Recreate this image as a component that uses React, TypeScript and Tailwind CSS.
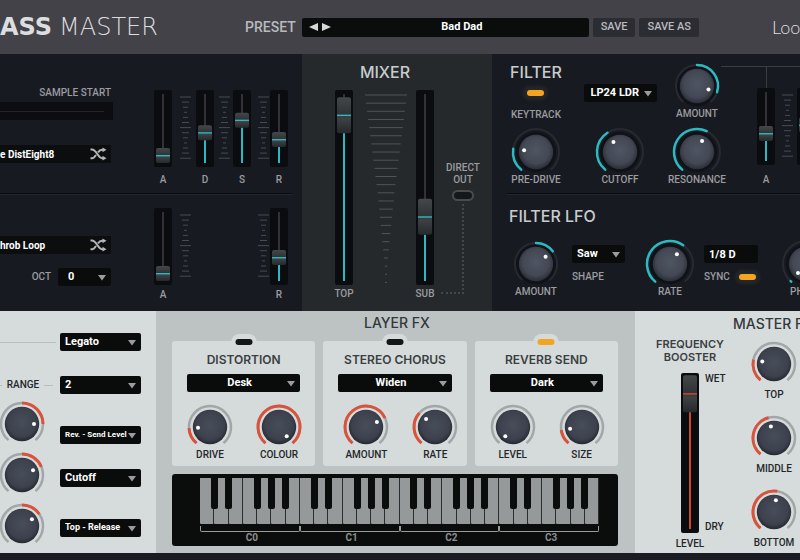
import { useState } from "react";
import type { ReactNode } from "react";

const LABEL = "font-[Roboto,sans-serif] text-[10px] leading-3 font-medium whitespace-nowrap";
const HEADING = "font-[Inter,sans-serif] leading-5 font-medium whitespace-nowrap";

function polar(angle: number, radius: number) {
  const rad = (angle * Math.PI) / 180;
  return [25 + radius * Math.sin(rad), 25 - radius * Math.cos(rad)];
}

function arc(from: number, to: number, radius: number) {
  const [x1, y1] = polar(from, radius);
  const [x2, y2] = polar(to, radius);
  return `M${x1} ${y1} A${radius} ${radius} 0 ${to - from > 180 ? 1 : 0} 1 ${x2} ${y2}`;
}

type KnobProps = {
  label?: string;
  name?: string;
  angle: number;
  bipolar?: boolean;
  ring?: number;
  light?: boolean;
  gap?: string;
};

function Knob({ label, name, angle, bipolar = false, ring = 23, light = false, gap = "mt-px" }: KnobProps) {
  const [value, setValue] = useState(angle);
  const start = bipolar ? Math.min(0, value) : -140;
  const end = bipolar ? Math.max(0, value) : value;
  const [dx, dy] = polar(value, 12);
  return (
    <label className="flex shrink-0 flex-col items-center">
      <span className="relative block h-[46px] w-[50px]">
        <svg width="50" height="46" viewBox="0 0 50 46" className="block overflow-visible" aria-hidden="true">
          <defs>
            <radialGradient id="cap-dark" cx="50%" cy="45%" r="55%">
              <stop offset="0" stopColor="#505563" />
              <stop offset="0.7" stopColor="#434854" />
              <stop offset="1" stopColor="#2a2e37" />
            </radialGradient>
            <radialGradient id="cap-light" cx="50%" cy="45%" r="55%">
              <stop offset="0" stopColor="#474d59" />
              <stop offset="0.75" stopColor="#3c414d" />
              <stop offset="1" stopColor="#242830" />
            </radialGradient>
          </defs>
          {!light && <circle cx="25" cy="25" r="20" fill="#101218" />}
          <path d={arc(-140, 140, ring)} fill="none" stroke={light ? "#a2a6a8" : "#272a31"} strokeWidth={light ? 2.5 : 2} />
          {end > start && (
            <path
              d={arc(start, end, ring)}
              fill="none"
              stroke={light ? "#d9533c" : "#2cb9c3"}
              strokeWidth={light ? 3 : 2.5}
              strokeLinecap={light ? "butt" : "round"}
            />
          )}
          <circle cx="25" cy="25" r="17.2" fill={light ? "url(#cap-light)" : "url(#cap-dark)"} />
          <circle cx={dx} cy={dy} r="2" fill="#fff" />
        </svg>
        <input
          type="range"
          min={-140}
          max={140}
          value={value}
          onChange={(e) => setValue(Number(e.target.value))}
          aria-label={label ?? name}
          className="absolute inset-0 h-full w-full cursor-pointer opacity-0"
        />
      </span>
      {label && <span className={`${LABEL} ${gap} ${light ? "text-[#24272a]" : "text-[#9b9ca0]"}`}>{label}</span>}
    </label>
  );
}

type FaderProps = {
  label?: string;
  name: string;
  level: number;
  height?: number;
  cap?: number;
  red?: boolean;
  gap?: string;
};

function Fader({ label, name, level, height = 77, cap = 15, red = false, gap = "mt-[7px]" }: FaderProps) {
  const [value, setValue] = useState(level);
  const top = 1 + (height - 5 - cap) * (1 - value / 100);
  const color = red ? "#cf4a2c" : "#2cb9c3";
  return (
    <label className="flex w-[18px] flex-col items-center">
      <span className="relative block">
        <svg width="18" height={height} className="block" aria-hidden="true">
          <defs>
            <linearGradient id="fader-cap" x1="0" y1="0" x2="0" y2="1">
              <stop offset="0" stopColor="#44484b" />
              <stop offset="0.45" stopColor="#303437" />
              <stop offset="0.6" stopColor="#3d4144" />
              <stop offset="1" stopColor="#26292c" />
            </linearGradient>
          </defs>
          <rect width="18" height={height} rx="2" fill="#0b0c0f" />
          <rect x="8" y="4" width="2" height={height - 8} fill="#303238" />
          <rect x="8" y={top + cap} width="2" height={Math.max(0, height - 4 - top - cap)} fill={color} />
          <rect x="2" y={top} width="14" height={cap} rx="2" fill="url(#fader-cap)" />
          <rect x="2" y={top + cap / 2 - 0.5} width="14" height="1.4" fill={color} />
        </svg>
        <input
          type="range"
          min={0}
          max={100}
          value={value}
          onChange={(e) => setValue(Number(e.target.value))}
          aria-label={name}
          className="absolute inset-0 h-full w-full cursor-pointer opacity-0 [direction:rtl] [writing-mode:vertical-lr]"
        />
      </span>
      {label && <span className={`${LABEL} ${gap} ${red ? "text-[#24272a]" : "text-[#9b9ca0]"}`}>{label}</span>}
    </label>
  );
}

const TICKS = [11, 7, 5, 3, 5, 7, 11, 7, 5, 3, 5, 7, 11];

function Ticks() {
  return (
    <svg width="11" height="77" className="block" aria-hidden="true">
      {TICKS.map((w, i) => (
        <rect key={i} x={(11 - w) / 2} y={6.5 + i * 5.1} width={w} height="1" fill="#484b50" />
      ))}
    </svg>
  );
}

function MixerScale() {
  return (
    <svg width="42" height="195" className="block" aria-hidden="true">
      {Array.from({ length: 24 }, (_, i) => {
        const w = Math.max(2, 42 - i * 2.1 + (i > 12 ? (i - 12) * 0.5 : 0));
        return <rect key={i} x={(42 - w) / 2} y={4.5 + i * 8.15} width={w} height="1" fill="#505457" />;
      })}
    </svg>
  );
}

type PickerProps = {
  name: string;
  value: string;
  width?: string;
  text?: string;
};

function Picker({ name, value, width = "w-full", text = "pl-[5px] text-[11px]" }: PickerProps) {
  return (
    <span className={`relative block h-[18px] shrink-0 ${width}`}>
      <select
        aria-label={name}
        defaultValue={value}
        className={`block h-full w-full appearance-none rounded-[2px] bg-[#0a0c0c] font-[Roboto,sans-serif] font-bold text-white ${text}`}
      >
        <option>{value}</option>
      </select>
      <svg width="8" height="6" className="pointer-events-none absolute top-[7px] right-[5px]" aria-hidden="true">
        <path d="M0 0H8L4 5.5Z" fill="#9a9da0" />
      </svg>
    </span>
  );
}

function Shuffle() {
  return (
    <button aria-label="Shuffle" className="block">
      <svg width="17" height="14" viewBox="0 0 17 14" fill="none" stroke="#b4b6b8" strokeWidth="2" aria-hidden="true">
        <path d="M0.5 2.5H2C6.5 2.5 8 11.2 12 11.2H13" />
        <path d="M0.5 11.2H2C3.8 11.2 5 9.6 6 8M8 5.4C9.2 3.6 10.2 2.7 12 2.7H13" />
        <path d="M12.5 0.4L16.5 2.8L12.5 5.2ZM12.5 8.8L16.5 11.2L12.5 13.6Z" fill="#b4b6b8" stroke="none" />
      </svg>
    </button>
  );
}

function Lamp({ name, on = false, light = false }: { name: string; on?: boolean; light?: boolean }) {
  return (
    <input
      type="checkbox"
      aria-label={name}
      defaultChecked={on}
      className={`block h-[6px] w-[17px] cursor-pointer appearance-none rounded-full bg-[#141717] checked:bg-[#f5a422] ${
        light ? "" : "shadow-[0_0_3px_4px_#24272a]"
      }`}
    />
  );
}

function Divider({ className }: { className: string }) {
  return <div className={`h-[2px] border-t border-[#0a0b0e] bg-[#23262c] ${className}`} />;
}

const ENVELOPE = "grid shrink-0 grid-cols-[26px_16px_23px_14px_25px_12px_18px]";

function Layers() {
  return (
    <section className="bg-[#181a21]">
      <div className="flex pb-[7px]">
        <div className="w-[113px] pt-[33px]">
          <label className="block">
            <span className={`${LABEL} block pr-[2px] text-right text-[#9b9ca0]`}>SAMPLE START</span>
            <span className="relative mt-[3px] flex h-[18px] items-center bg-[#0c0d10]">
              <span className="h-px w-[104px] bg-[#22252a]" />
              <input type="range" aria-label="Sample start" className="absolute inset-0 h-full w-full opacity-0" />
            </span>
          </label>
          <div className="mt-[25px] mr-[2px] flex h-[18px] items-center justify-between bg-[#0b0d0e] pr-1">
            <span className="font-[Roboto,sans-serif] text-[10px] font-bold text-white">e DistEight8</span>
            <Shuffle />
          </div>
        </div>
        <div className={`${ENVELOPE} ml-[41px] pt-[36px]`}>
          <Fader label="A" name="Top attack" level={0} />
          <Ticks />
          <Fader label="D" name="Top decay" level={40} />
          <Ticks />
          <Fader label="S" name="Top sustain" level={62} />
          <Ticks />
          <Fader label="R" name="Top release" level={28} />
        </div>
      </div>
      <Divider className="mr-[10px]" />
      <div className="flex pb-[10px]">
        <div className="w-[113px] pt-[41px]">
          <div className="mr-[2px] flex h-[18px] items-center justify-between bg-[#0b0d0e] pr-1">
            <span className="font-[Roboto,sans-serif] text-[10px] font-bold text-white">hrob Loop</span>
            <Shuffle />
          </div>
          <div className="mt-[14px] mr-[2px] flex items-center justify-end gap-[7px]">
            <span className={`${LABEL} text-[#9b9ca0]`}>OCT</span>
            <Picker name="Octave" value="0" width="w-[53px]" text="pl-[10px] text-[11px]" />
          </div>
        </div>
        <div className={`${ENVELOPE} ml-[41px] pt-[13px]`}>
          <Fader label="A" name="Sub attack" level={0} gap="mt-1" />
          <Ticks />
          <div className="col-span-3" />
          <Ticks />
          <Fader label="R" name="Sub release" level={28} gap="mt-1" />
        </div>
      </div>
    </section>
  );
}

function Mixer() {
  return (
    <section className="bg-[#25292c] pt-2">
      <h2 className={`${HEADING} pr-[24px] text-center text-base text-[#c9cccd]`}>MIXER</h2>
      <div className="mt-2 grid grid-cols-[30px_51px_25px_44px] pl-[33px]">
        <Fader label="TOP" name="Top level" level={96} height={195} cap={36} gap="mt-[3px]" />
        <MixerScale />
        <Fader label="SUB" name="Sub level" level={30} height={195} cap={36} gap="mt-[3px]" />
        <div className="flex flex-col items-center pt-[72px]">
          <label htmlFor="direct-out" className={`${LABEL} text-center text-[#9b9ca0]`}>
            DIRECT
            <br />
            OUT
          </label>
          <input
            id="direct-out"
            type="checkbox"
            className="mt-1 block h-[11px] w-[22px] appearance-none rounded-full border-2 border-[#4a4b4a] bg-[#15181a] checked:bg-[#f5a422]"
          />
          <div className="mt-[3px] h-[90px] w-[23px] self-start border-r-2 border-b-2 border-dotted border-[#43474a]" />
        </div>
      </div>
    </section>
  );
}

function Filter() {
  return (
    <section className="overflow-hidden bg-[#181a21]">
      <div className="flex h-[139px]">
        <div className="grid shrink-0 grid-cols-[62px_106px_48px] content-start justify-items-center pl-[13px]">
          <div className="flex h-[73px] flex-col items-center pt-2">
            <h2 className={`${HEADING} text-base text-[#c9cccd]`}>FILTER</h2>
            <label className="mt-2 flex flex-col items-center gap-[13px]">
              <Lamp name="Keytrack" on />
              <span className={`${LABEL} text-[#9b9ca0]`}>KEYTRACK</span>
            </label>
          </div>
          <div className="pt-[30px]">
            <Picker name="Filter type" value="LP24 LDR" width="w-[73px]" text="pl-[7px] text-[11px]" />
          </div>
          <div className="pt-[7px]">
            <Knob label="AMOUNT" angle={107} bipolar ring={21} />
          </div>
          <Knob label="PRE-DRIVE" angle={-82} />
          <Knob label="CUTOFF" angle={-33} />
          <Knob label="RESONANCE" angle={25} />
        </div>
        <div className="min-w-0 flex-1 overflow-hidden pt-[12px]">
          <div className="h-[22px] border-t border-[#3b3d43] pl-[45px]">
            <div className="h-full w-px bg-[#3b3d43]" />
          </div>
          <div className="grid grid-cols-[25px_15px_23px] pl-[36px]">
            <Fader label="A" name="Filter attack" level={35} gap="mt-[9px]" />
            <Ticks />
            <Fader name="Filter decay" level={50} />
          </div>
        </div>
      </div>
      <Divider className="ml-[15px]" />
      <h2 className={`${HEADING} mt-[11px] pl-[17px] text-base text-[#c9cccd]`}>FILTER LFO</h2>
      <div className="mt-[13px] flex pl-[19px]">
        <Knob label="AMOUNT" angle={53} bipolar ring={21} />
        <div className="ml-[11px] pt-[6px]">
          <Picker name="LFO shape" value="Saw" width="w-[53px]" />
          <span className={`${LABEL} mt-2 block text-[#9b9ca0]`}>SHAPE</span>
        </div>
        <div className="ml-[20px] shrink-0">
          <Knob label="RATE" angle={35} />
        </div>
        <div className="ml-[9px] pt-[6px]">
          <input
            type="text"
            aria-label="LFO rate"
            defaultValue="1/8 D"
            className="block h-[18px] w-[54px] rounded-[2px] bg-[#0a0c0c] pl-[5px] font-[Roboto,sans-serif] text-[11px] font-bold text-white"
          />
          <label className="mt-2 flex items-center gap-[9px]">
            <span className={`${LABEL} text-[#9b9ca0]`}>SYNC</span>
            <Lamp name="Sync" on />
          </label>
        </div>
        <div className="ml-[23px] shrink-0">
          <Knob label="PHASE" angle={-138} />
        </div>
      </div>
    </section>
  );
}

function Modulation() {
  return (
    <section className="flex bg-[#d6dbdb]">
      <div className="w-[60px] pt-[31px]">
        <div className="mr-1 h-px bg-[#b9bebe]" />
        <div className="mt-[36px] flex h-3 items-center justify-between pr-[7px]">
          <span className="h-px w-[2px] bg-[#b9bebe]" />
          <span className={`${LABEL} text-[#24272a]`}>RANGE</span>
          <span className="h-px w-[9px] bg-[#b9bebe]" />
        </div>
        <div className="mt-2 -ml-[3px] flex flex-col items-start gap-[5px]">
          <Knob name="Range amount" angle={90} bipolar light ring={21} />
          <Knob name="Cutoff amount" angle={67} bipolar light ring={21} />
          <Knob name="Release amount" angle={56} bipolar light ring={21} />
        </div>
      </div>
      <div className="w-[81px] pt-[22px]">
        <Picker name="Voice mode" value="Legato" />
        <div className="mt-[25px]">
          <Picker name="Bend range" value="2" />
        </div>
        <div className="mt-[32px]">
          <Picker name="Target 1" value="Rev. - Send Level" text="pl-[5px] text-[8px]" />
        </div>
        <div className="mt-[25px]">
          <Picker name="Target 2" value="Cutoff" />
        </div>
        <div className="mt-[32px]">
          <Picker name="Target 3" value="Top - Release" text="pl-[5px] text-[9px]" />
        </div>
      </div>
    </section>
  );
}

function EffectCard({ title, mode, on = false, inset, children }: { title: string; mode: string; on?: boolean; inset: string; children: ReactNode }) {
  return (
    <div className="relative rounded-[3px] bg-[#d5dada] pt-[10px] pb-[5px]">
      <div className="absolute -top-[7px] left-1/2 flex h-[15px] w-[25px] -translate-x-1/2 items-center justify-center rounded-full bg-[#d5dada]">
        <Lamp name={`${title} on`} on={on} light />
      </div>
      <h3 className="text-center font-[Inter,sans-serif] text-xs leading-[18px] font-semibold whitespace-nowrap text-[#3a3f42]">{title}</h3>
      <div className="mx-[15px] mt-[5px]">
        <Picker name={`${title} mode`} value={mode} text="pr-[8px] text-[11px] [text-align-last:center]" />
      </div>
      <div className={`mt-[10px] flex gap-[19px] ${inset}`}>{children}</div>
    </div>
  );
}

const BLACK_KEYS = ["left-[11%]", "left-[25%]", "left-[54%]", "left-[68%]", "left-[82%]"];

function Keyboard() {
  return (
    <div className="mt-2 flex rounded-[3px] bg-[#0b0d0d] pt-1 pr-[19px] pb-[3px] pl-[28px]">
      {["C0", "C1", "C2", "C3"].map((octave) => (
        <div key={octave} className="flex-1">
          <div className="relative flex h-[46px]">
            {["C", "D", "E", "F", "G", "A", "B"].map((note) => (
              <button key={note} aria-label={`${note} ${octave}`} className="flex-1 rounded-b-[1px] border-r border-[#2b2d2d] bg-[#969999]" />
            ))}
            {BLACK_KEYS.map((left) => (
              <button key={left} aria-label={`Sharp ${octave}`} className={`absolute top-0 h-[31px] w-[7%] rounded-b-[2px] bg-[#0b0d0d] ${left}`} />
            ))}
          </div>
          <div className="mt-[2px] h-[6px] rounded-b-[2px] border-x border-b border-[#9a9c9c]" />
          <div className="pl-1 text-center font-[Roboto,sans-serif] text-[10px] leading-[11px] font-bold text-[#8b8e8e]">{octave}</div>
        </div>
      ))}
    </div>
  );
}

function LayerFx() {
  return (
    <section className="bg-[#bdc3c3] pt-[2px] pr-[17px] pb-[7px] pl-4">
      <h2 className={`${HEADING} pl-1 text-center text-sm text-[#33383b]`}>LAYER FX</h2>
      <div className="mt-2 grid grid-cols-3 gap-2">
        <EffectCard title="DISTORTION" mode="Desk" inset="pl-[13px]">
          <Knob label="DRIVE" angle={-93} light ring={21} />
          <Knob label="COLOUR" angle={140} light ring={21} />
        </EffectCard>
        <EffectCard title="STEREO CHORUS" mode="Widen" inset="pl-[18px]">
          <Knob label="AMOUNT" angle={65} light ring={21} />
          <Knob label="RATE" angle={-48} light ring={21} />
        </EffectCard>
        <EffectCard title="REVERB SEND" mode="Dark" on inset="pl-[13px]">
          <Knob label="LEVEL" angle={-140} light ring={21} />
          <Knob label="SIZE" angle={-98} light ring={21} />
        </EffectCard>
      </div>
      <Keyboard />
    </section>
  );
}

function MasterFx() {
  return (
    <section className="flex overflow-hidden bg-[#d6dbdb] pl-[21px]">
      <div className="w-[68px] shrink-0 pt-[27px]">
        <h3 className="text-center font-[Inter,sans-serif] text-[11px] leading-[13px] font-semibold text-[#3a3f42]">
          FREQUENCY
          <br />
          BOOSTER
        </h3>
        <div className="mt-[9px] grid grid-cols-[25px_18px_25px]">
          <span />
          <Fader label="LEVEL" name="Frequency booster level" level={99} height={160} cap={37} red gap="mt-[5px]" />
          <div className={`${LABEL} flex h-[160px] flex-col justify-between pl-[6px] text-[#24272a]`}>
            <span>WET</span>
            <span>DRY</span>
          </div>
        </div>
      </div>
      <div className="ml-[9px] shrink-0 pt-[3px]">
        <h2 className={`${HEADING} text-sm text-[#33383b]`}>MASTER FX</h2>
        <div className="mt-[5px] flex flex-col items-start gap-[12px] pl-4">
          <Knob label="TOP" angle={-78} light ring={21} gap="mt-1" />
          <Knob label="MIDDLE" angle={-15} light ring={21} gap="mt-1" />
          <Knob label="BOTTOM" angle={9} light ring={21} gap="mt-1" />
        </div>
      </div>
    </section>
  );
}

function Header() {
  const save = "h-[19px] rounded-[2px] bg-[#2c2c33] px-2 font-[Roboto,sans-serif] text-[11px] font-medium whitespace-nowrap text-[#b9babd]";
  return (
    <header className="flex h-[54px] items-center overflow-hidden bg-[#424248]">
      <h1 className="flex w-[245px] shrink-0 gap-[7px] font-['DejaVu_Sans',sans-serif] text-2xl text-[#dcdddf]">
        <span className="font-bold">ASS</span>
        <span className="font-extralight">MASTER</span>
      </h1>
      <span className="w-[57px] shrink-0 font-[Roboto,sans-serif] text-sm font-medium text-[#b9babd]">PRESET</span>
      <div className="flex h-[19px] min-w-0 flex-1 items-center gap-[4px] rounded-[2px] bg-[#0b0d0d] pl-[7px]">
        <button aria-label="Previous preset">
          <svg width="9" height="8" className="block" aria-hidden="true">
            <path d="M9 0V8L0 4Z" fill="#d6d7d8" />
          </svg>
        </button>
        <button aria-label="Next preset">
          <svg width="9" height="8" className="block" aria-hidden="true">
            <path d="M0 0V8L9 4Z" fill="#d6d7d8" />
          </svg>
        </button>
        <button className="flex-1 font-[Roboto,sans-serif] text-[11px] font-bold text-white">Bad Dad</button>
      </div>
      <button className={`${save} ml-1`}>SAVE</button>
      <button className={`${save} ml-1`}>SAVE AS</button>
      <span className="ml-[73px] w-[28px] shrink-0 font-[Lato,sans-serif] text-lg font-light whitespace-nowrap text-[#dcdddf]">
        Loop
      </span>
    </header>
  );
}

export default function App() {
  return (
    <main className="overflow-hidden bg-[#1a1b23] pb-[7px]">
      <Header />
      <div className="grid grid-cols-[302px_190px_minmax(0,1fr)]">
        <Layers />
        <Mixer />
        <Filter />
      </div>
      <div className="grid grid-cols-[156px_minmax(0,1fr)_165px]">
        <Modulation />
        <LayerFx />
        <MasterFx />
      </div>
    </main>
  );
}
